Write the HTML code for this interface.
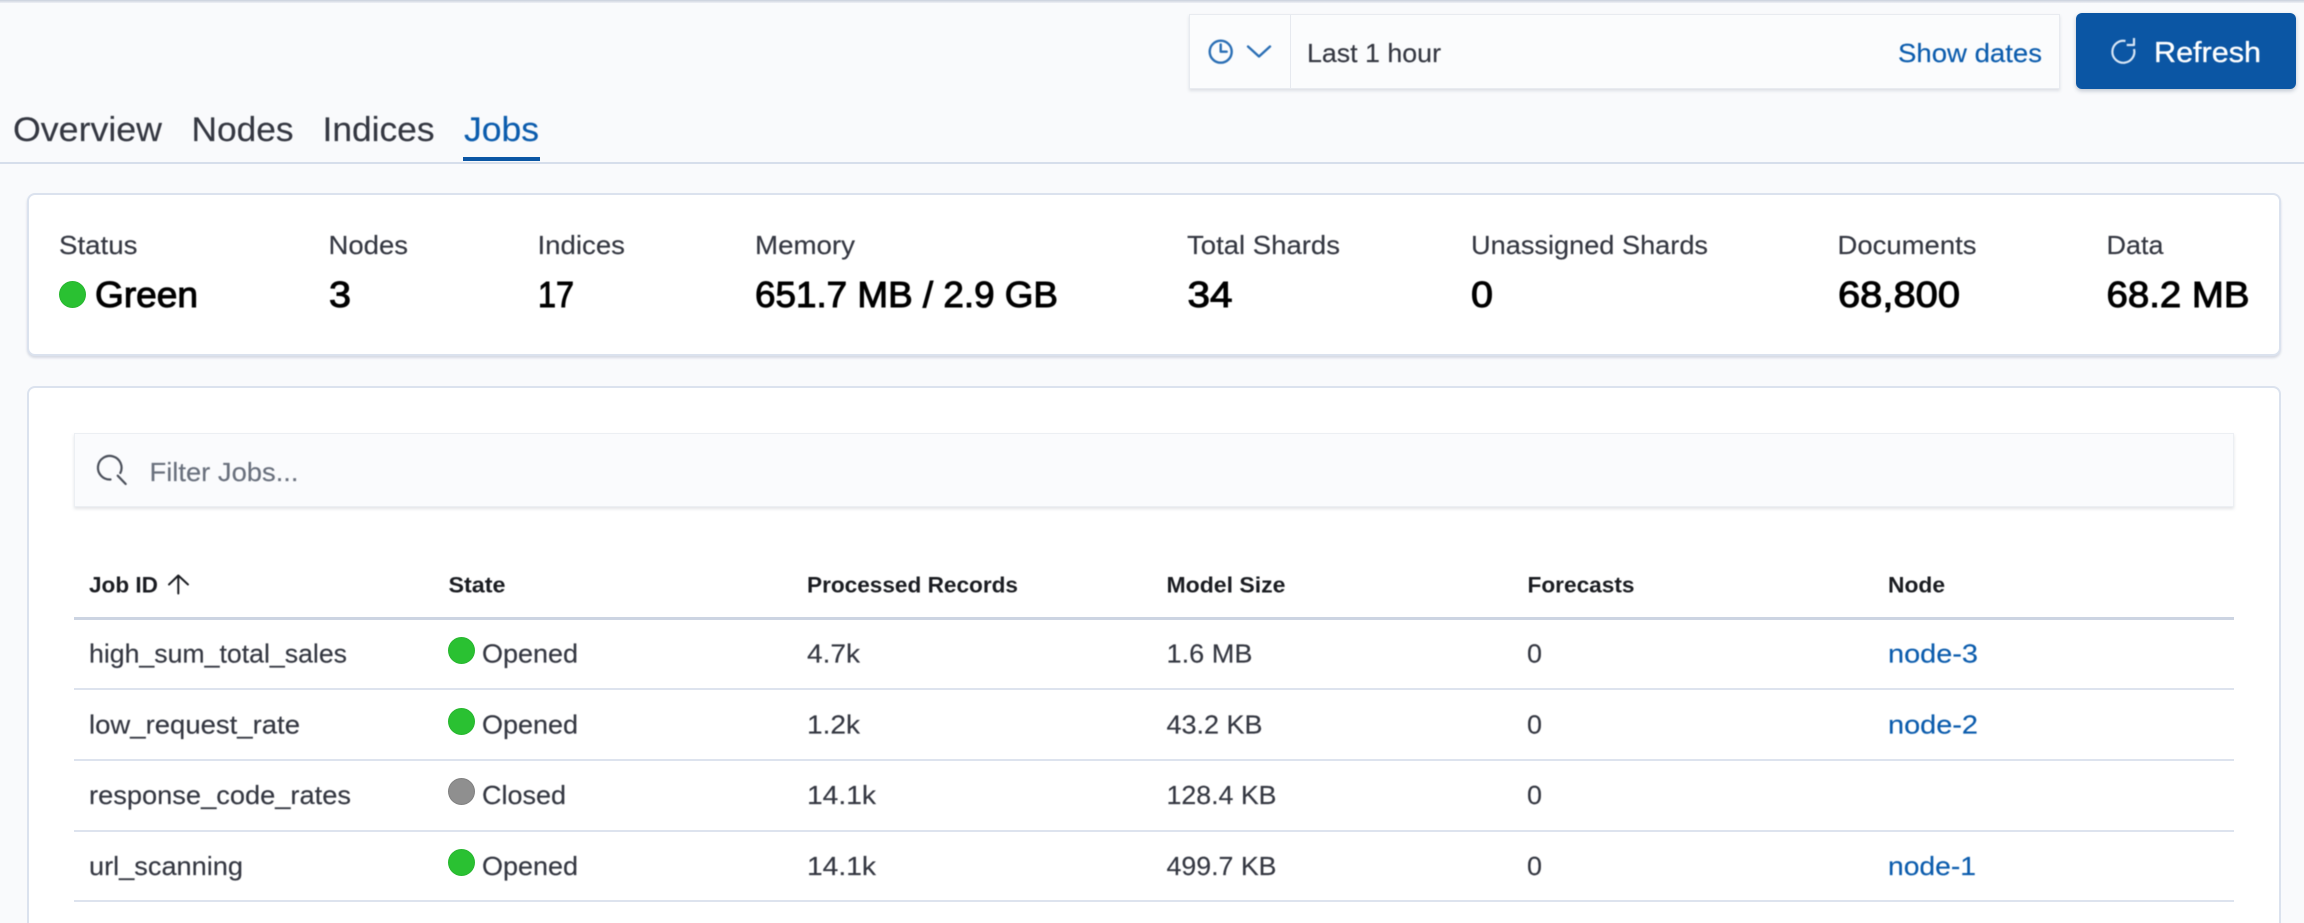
<!DOCTYPE html>
<html lang="en">
<head>
<meta charset="utf-8">
<title>Jobs</title>
<style>
html,body{margin:0;padding:0;width:2304px;height:923px;overflow:hidden;background:#f9fafc}
#root{position:relative;width:2304px;height:923px;overflow:hidden;background:#f9fafc}
.abs{position:absolute;box-sizing:border-box}
#top{left:0;top:0;width:2304px;height:3px;background:linear-gradient(#c9d0dc,#eef0f5)}
#tabline{left:0;top:162px;width:2304px;height:2px;background:#d6deeb}
#under{left:463px;top:157px;width:77px;height:4px;background:#0b56a4}
#picker{left:1189px;top:14px;width:871px;height:75px;background:#fbfcfd;border:1px solid #e8ebf0;box-shadow:0 2px 3px rgba(100,110,130,.18)}
#divider{left:1290px;top:15px;width:1px;height:73px;background:#e6e9ef}
#refresh{left:2076px;top:13px;width:220px;height:76px;border-radius:6px;background:#0b56a4;box-shadow:0 2px 4px rgba(60,80,110,.3)}
.card{background:#fff;border:2px solid #dbe2ee;border-radius:8px}
#c1{left:27px;top:193px;width:2254px;height:163px;box-shadow:0 2px 2px rgba(110,125,155,.25)}
#c2{left:27px;top:386px;width:2254px;height:537px;border-bottom:0;border-radius:8px 8px 0 0}
#filter{left:74px;top:433px;width:2160px;height:74px;background:#fafbfd;border:1px solid #eceff3;box-shadow:0 2px 3px rgba(100,110,130,.18)}
.ln{left:74px;width:2160px;height:2px;background:#dde3ee}
.dot{border-radius:50%;width:27px;height:27px;background:#2ac132;box-shadow:inset 0 0 0 1px rgba(0,60,0,.08)}
.gr{background:#8f8f8f;box-shadow:inset 0 0 0 1px rgba(0,0,0,.1)}
svg{position:absolute;left:0;top:0;display:block;filter:blur(.45px)}
text{font-family:"Liberation Sans",sans-serif;font-size:26px;fill:#343741;stroke:#343741;stroke-width:.15px}
.tab{font-size:34px}
.val{font-size:36px;fill:#000;stroke:#000;stroke-width:1px}
.hd{font-size:22.5px;font-weight:700;fill:#1a1c21;stroke:none}
.bl{fill:#0b5cad;stroke:#0b5cad}
.ph{fill:#69707d;stroke:#69707d}
.ref{font-size:29px;fill:#fff;stroke:#fff;stroke-width:.35px}
</style>
</head>
<body>
<div id="root">
<div class="abs" id="top"></div>
<div class="abs" id="picker"></div>
<div class="abs" id="divider"></div>
<div class="abs" id="refresh"></div>
<div class="abs" id="tabline"></div>
<div class="abs" id="under"></div>
<div class="abs card" id="c1"></div>
<div class="abs card" id="c2"></div>
<div class="abs" id="filter"></div>
<div class="abs ln" style="top:617px;height:3px;background:#ccd4e2"></div>
<div class="abs ln" style="top:688px"></div>
<div class="abs ln" style="top:759px"></div>
<div class="abs ln" style="top:830px"></div>
<div class="abs ln" style="top:900px"></div>
<div class="abs dot" style="left:59px;top:281px"></div>
<div class="abs dot" style="left:448px;top:637px"></div>
<div class="abs dot" style="left:448px;top:708px"></div>
<div class="abs dot gr" style="left:448px;top:778px"></div>
<div class="abs dot" style="left:448px;top:849px"></div>

<svg width="2304" height="923" viewBox="0 0 2304 923" xmlns="http://www.w3.org/2000/svg">
<g fill="none" stroke="#2b6fb5" stroke-width="2.4" stroke-linecap="round" stroke-linejoin="round">
<circle cx="1220.7" cy="51.7" r="11"/>
<path d="M1220.7 44.5V51.7H1226.7"/>
<path d="M1248 46.5L1259 56.5L1270 46.5"/>
</g>
<path d="M2125.5 41A11 11 0 1 0 2134 49M2134 38V45H2126.7" fill="none" stroke="#d8e6f5" stroke-width="2.2" stroke-linejoin="round"/>
<path d="M110.5 479.5A11.8 11.8 0 1 1 120.3 473M117.7 475.7L125.7 484" fill="none" stroke="#4a4f5a" stroke-width="2.2" stroke-linecap="round"/>
<path d="M178.3 593.5V575.5M169 584.5L178.3 575.5L188 584.5" fill="none" stroke="#1a1c21" stroke-width="2" stroke-linecap="round" stroke-linejoin="round"/>

<text x="1307" y="62" textLength="134" lengthAdjust="spacingAndGlyphs">Last 1 hour</text>
<text class="bl" x="1898" y="62" textLength="144" lengthAdjust="spacingAndGlyphs">Show dates</text>
<text class="ref" x="2154" y="62" textLength="107" lengthAdjust="spacingAndGlyphs">Refresh</text>

<text class="tab" x="13" y="141" textLength="149" lengthAdjust="spacingAndGlyphs">Overview</text>
<text class="tab" x="191.5" y="141" textLength="102" lengthAdjust="spacingAndGlyphs">Nodes</text>
<text class="tab" x="322.5" y="141" textLength="112" lengthAdjust="spacingAndGlyphs">Indices</text>
<text class="tab bl" x="464" y="141" textLength="75" lengthAdjust="spacingAndGlyphs">Jobs</text>

<text x="59" y="254" textLength="78.5" lengthAdjust="spacingAndGlyphs">Status</text>
<text x="328.5" y="254" textLength="79.5" lengthAdjust="spacingAndGlyphs">Nodes</text>
<text x="537.5" y="254" textLength="87.5" lengthAdjust="spacingAndGlyphs">Indices</text>
<text x="755" y="254" textLength="100" lengthAdjust="spacingAndGlyphs">Memory</text>
<text x="1187" y="254" textLength="153" lengthAdjust="spacingAndGlyphs">Total Shards</text>
<text x="1471" y="254" textLength="237" lengthAdjust="spacingAndGlyphs">Unassigned Shards</text>
<text x="1837.5" y="254" textLength="139" lengthAdjust="spacingAndGlyphs">Documents</text>
<text x="2106.5" y="254" textLength="57" lengthAdjust="spacingAndGlyphs">Data</text>

<text class="val" x="95" y="307" textLength="103" lengthAdjust="spacingAndGlyphs">Green</text>
<text class="val" x="329" y="307" textLength="22" lengthAdjust="spacingAndGlyphs">3</text>
<text class="val" x="538" y="307" textLength="36" lengthAdjust="spacingAndGlyphs">17</text>
<text class="val" x="755" y="307" textLength="303" lengthAdjust="spacingAndGlyphs">651.7 MB / 2.9 GB</text>
<text class="val" x="1187.5" y="307" textLength="45" lengthAdjust="spacingAndGlyphs">34</text>
<text class="val" x="1471" y="307" textLength="22" lengthAdjust="spacingAndGlyphs">0</text>
<text class="val" x="1838" y="307" textLength="122" lengthAdjust="spacingAndGlyphs">68,800</text>
<text class="val" x="2106.5" y="307" textLength="143" lengthAdjust="spacingAndGlyphs">68.2 MB</text>

<text class="ph" x="149.5" y="481" textLength="149" lengthAdjust="spacingAndGlyphs">Filter Jobs...</text>

<text class="hd" x="89" y="592.5" textLength="69" lengthAdjust="spacingAndGlyphs">Job ID</text>
<text class="hd" x="448.5" y="592.5" textLength="57" lengthAdjust="spacingAndGlyphs">State</text>
<text class="hd" x="807" y="592.5" textLength="211" lengthAdjust="spacingAndGlyphs">Processed Records</text>
<text class="hd" x="1166.5" y="592.5" textLength="119" lengthAdjust="spacingAndGlyphs">Model Size</text>
<text class="hd" x="1527.5" y="592.5" textLength="107" lengthAdjust="spacingAndGlyphs">Forecasts</text>
<text class="hd" x="1888" y="592.5" textLength="57" lengthAdjust="spacingAndGlyphs">Node</text>

<text x="89" y="662.5" textLength="258" lengthAdjust="spacingAndGlyphs">high_sum_total_sales</text>
<text x="482" y="662.5" textLength="96" lengthAdjust="spacingAndGlyphs">Opened</text>
<text x="807" y="662.5" textLength="53" lengthAdjust="spacingAndGlyphs">4.7k</text>
<text x="1166.5" y="662.5" textLength="86" lengthAdjust="spacingAndGlyphs">1.6 MB</text>
<text x="1527" y="662.5" textLength="15" lengthAdjust="spacingAndGlyphs">0</text>
<text class="bl" x="1888" y="662.5" textLength="90" lengthAdjust="spacingAndGlyphs">node-3</text>

<text x="89" y="733.5" textLength="211" lengthAdjust="spacingAndGlyphs">low_request_rate</text>
<text x="482" y="733.5" textLength="96" lengthAdjust="spacingAndGlyphs">Opened</text>
<text x="807" y="733.5" textLength="53" lengthAdjust="spacingAndGlyphs">1.2k</text>
<text x="1166.5" y="733.5" textLength="96" lengthAdjust="spacingAndGlyphs">43.2 KB</text>
<text x="1527" y="733.5" textLength="15" lengthAdjust="spacingAndGlyphs">0</text>
<text class="bl" x="1888" y="733.5" textLength="90" lengthAdjust="spacingAndGlyphs">node-2</text>

<text x="89" y="804" textLength="262" lengthAdjust="spacingAndGlyphs">response_code_rates</text>
<text x="482" y="804" textLength="84" lengthAdjust="spacingAndGlyphs">Closed</text>
<text x="807" y="804" textLength="69" lengthAdjust="spacingAndGlyphs">14.1k</text>
<text x="1166.5" y="804" textLength="110" lengthAdjust="spacingAndGlyphs">128.4 KB</text>
<text x="1527" y="804" textLength="15" lengthAdjust="spacingAndGlyphs">0</text>

<text x="89" y="875" textLength="154" lengthAdjust="spacingAndGlyphs">url_scanning</text>
<text x="482" y="875" textLength="96" lengthAdjust="spacingAndGlyphs">Opened</text>
<text x="807" y="875" textLength="69" lengthAdjust="spacingAndGlyphs">14.1k</text>
<text x="1166.5" y="875" textLength="110" lengthAdjust="spacingAndGlyphs">499.7 KB</text>
<text x="1527" y="875" textLength="15" lengthAdjust="spacingAndGlyphs">0</text>
<text class="bl" x="1888" y="875" textLength="88" lengthAdjust="spacingAndGlyphs">node-1</text>
</svg>
</div>
</body>
</html>
